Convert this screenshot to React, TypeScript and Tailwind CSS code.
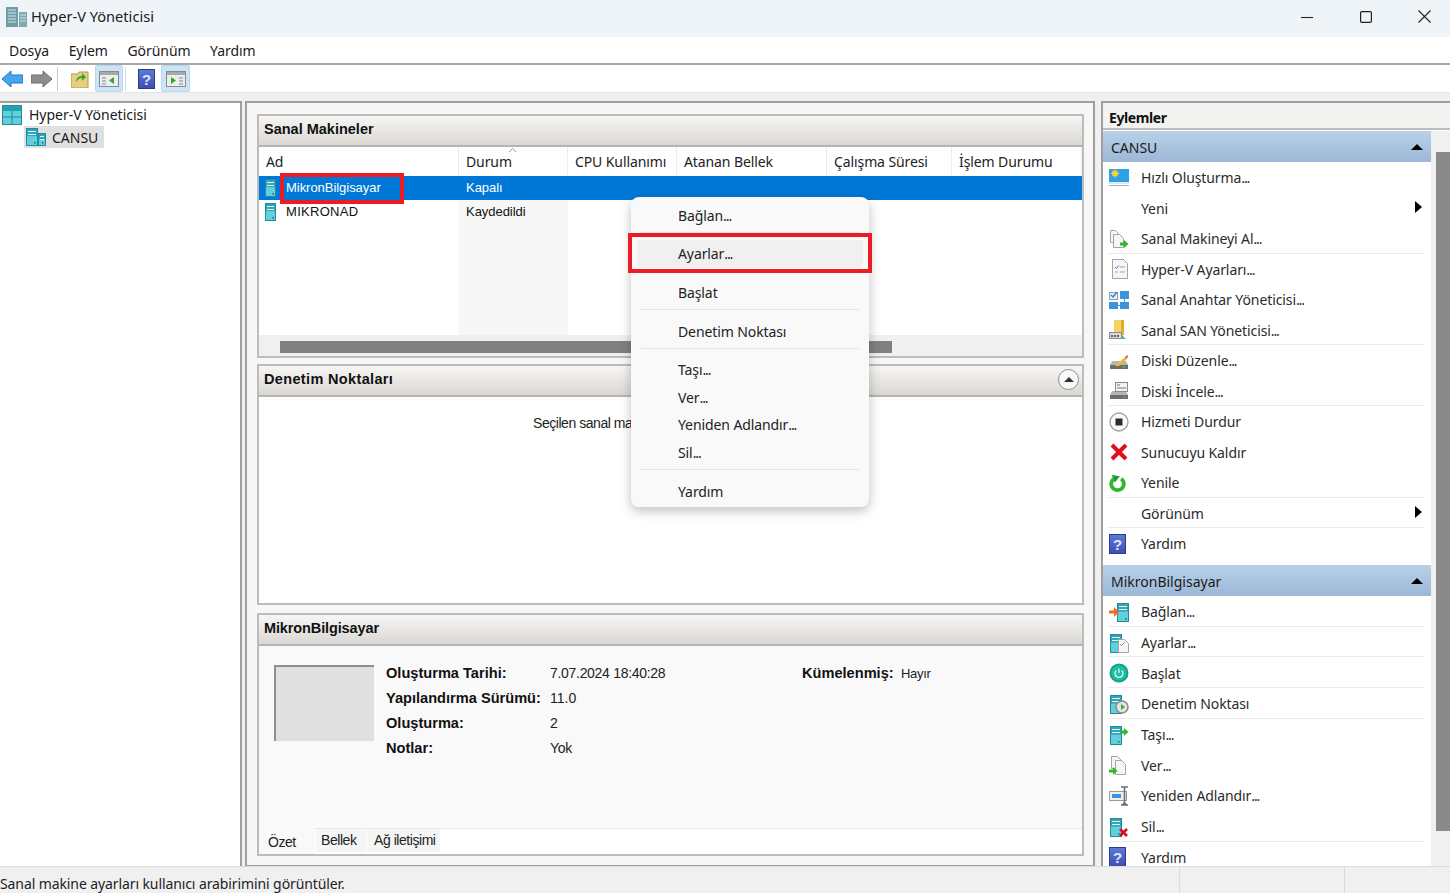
import type { ReactNode } from "react";

const ui = "font-['Noto_Sans','Open_Sans',sans-serif]";
const classic = "font-['Liberation_Sans',Arial,sans-serif]";

function Ico({ size = 20, children }: { size?: number; children: ReactNode }) {
  return (
    <svg width={size} height={size} viewBox="0 0 20 20" className="shrink-0">
      {children}
    </svg>
  );
}

// the dots in the original font sit much closer than Noto's
function Label({ text }: { text: string }) {
  if (!text.endsWith("...")) return <>{text}</>;
  return (
    <>
      {text.slice(0, -3)}
      <span className="tracking-[-1.1px]">...</span>
    </>
  );
}

// teal VM tower, reused by most of the action icons
const Tower = ({ x = 1, w = 11, y = 1, h = 18 }: { x?: number; w?: number; y?: number; h?: number }) => (
  <g>
    <rect x={x + 0.5} y={y + 0.5} width={w} height={h} fill="#5fd0dc" stroke="#1f8c9c" />
    <rect x={x + 1} y={y + 1} width={w - 1} height={h * 0.42} fill="#2fa5b5" />
    <path d={`M${x + 2} ${y + 3.5}h${w - 3}M${x + 2} ${y + 6.5}h${w - 3}`} stroke="#e8fbfd" />
    <rect x={x + w - 3} y={y + h - 3} width="1.5" height="1.5" fill="#15707d" />
  </g>
);

const GreenArrow = ({ x, y }: { x: number; y: number }) => (
  <path transform={`translate(${x} ${y})`} d="M0 2.5h4V0l4.5 4L4 8V5.5H0z" fill="#2dbb2d" />
);

const Doc = ({ x = 5, y = 1, w = 11, h = 16 }: { x?: number; y?: number; w?: number; h?: number }) => (
  <path
    d={`M${x + 0.5} ${y + 0.5}h${w - 4}l4 4v${h - 4}h-${w}z`}
    fill="#f6f6f6"
    stroke="#a5a5a5"
  />
);

const HelpIcon = ({ size = 20 }: { size?: number }) => (
  <svg width={size * 0.85} height={size} viewBox="0 0 17 20" className="shrink-0">
    <defs>
      <linearGradient id="helpFill" x1="0" y1="0" x2="0" y2="1">
        <stop offset="0" stopColor="#5d7bd8" />
        <stop offset="1" stopColor="#3d4fb0" />
      </linearGradient>
    </defs>
    <rect x="0.5" y="0.5" width="16" height="19" fill="url(#helpFill)" stroke="#2b3a8c" />
    <text x="8.5" y="15.5" textAnchor="middle" fontSize="15" fontWeight="700" fill="#e4e6fa" fontFamily="Liberation Sans">
      ?
    </text>
  </svg>
);

const Disk = () => (
  <g>
    <path d="M1 14l2-4h14l2 4v4H1z" fill="#b5b5b5" />
    <rect x="1" y="14" width="18" height="4" fill="#6d6d6d" />
    <rect x="14" y="15.5" width="2" height="1" fill="#59d659" />
  </g>
);

type Action = { label: string; icon?: ReactNode; sep?: boolean; arrow?: boolean };

const serverActions: Action[] = [
  {
    label: "Hızlı Oluşturma...",
    icon: (
      <Ico>
        <rect x="0" y="1" width="20" height="13" fill="#2f9fe6" />
        <circle cx="6" cy="5.5" r="3" fill="#ffcf33" />
        <path d="M6 1v9M1.5 5.5h9M3 2.5l6 6M9 2.5l-6 6" stroke="#ffcf33" strokeWidth="0.8" />
        <rect x="0" y="14" width="20" height="2" fill="#dfe8ee" />
        <rect x="0" y="17" width="20" height="1" fill="#9fb2bd" />
      </Ico>
    ),
  },
  { label: "Yeni", arrow: true },
  {
    label: "Sanal Makineyi Al...",
    sep: true,
    icon: (
      <Ico>
        <Doc x={1} y={1} w={9} h={12} />
        <Doc x={4} y={5} w={10} h={13} />
        <GreenArrow x={11} y={11} />
      </Ico>
    ),
  },
  {
    label: "Hyper-V Ayarları...",
    icon: (
      <Ico>
        <Doc x={3} y={0} w={15} h={19} />
        <path d="M6 8l1.5 1.5L10 6.5" stroke="#2a7fd6" fill="none" />
        <path d="M11 8h5M6 13h3M11 13h5" stroke="#a5a5a5" />
      </Ico>
    ),
  },
  {
    label: "Sanal Anahtar Yöneticisi...",
    icon: (
      <Ico>
        <rect x="0.5" y="2.5" width="8" height="7" fill="#e9eef3" stroke="#8aa0b5" />
        <path d="M2 5l2 2 4-5" stroke="#2a7fd6" strokeWidth="1.4" fill="none" />
        <rect x="11" y="1" width="9" height="8" fill="#3d93dc" />
        <rect x="0" y="12" width="9" height="7" fill="#3d93dc" />
        <rect x="11" y="12" width="9" height="7" fill="#3d93dc" />
        <path d="M9 15.5h2M15.5 9v3" stroke="#3d93dc" />
      </Ico>
    ),
  },
  {
    label: "Sanal SAN Yöneticisi...",
    sep: true,
    icon: (
      <Ico>
        <rect x="5" y="0" width="10" height="15" fill="#f5d561" />
        <rect x="12" y="0" width="3" height="15" fill="#d8ae33" />
        <rect x="0.5" y="12.5" width="12" height="6" fill="#d9d9d9" stroke="#8b8b8b" />
        <path d="M3 15v2M6 15v2M9 15v2" stroke="#333" strokeWidth="1.4" />
        <path d="M13 15l4 4h-4z" fill="#69b96b" />
      </Ico>
    ),
  },
  {
    label: "Diski Düzenle...",
    icon: (
      <Ico>
        <Disk />
        <path d="M6 15L16 6l2 2-8 7z" fill="#f2b632" />
        <path d="M16 6l2-2 1 1-1 3z" fill="#e0574f" />
      </Ico>
    ),
  },
  {
    label: "Diski İncele...",
    sep: true,
    icon: (
      <Ico>
        <Disk />
        <rect x="6.5" y="1.5" width="12" height="9" fill="#f3f3f3" stroke="#888" />
        <path d="M8 4h3M8 7h9" stroke="#777" />
      </Ico>
    ),
  },
  {
    label: "Hizmeti Durdur",
    icon: (
      <Ico>
        <circle cx="10" cy="10" r="9" fill="#fafafa" stroke="#a5a5a5" strokeWidth="1.4" />
        <rect x="6.5" y="6.5" width="7" height="7" fill="#2b2b2b" />
      </Ico>
    ),
  },
  {
    label: "Sunucuyu Kaldır",
    icon: (
      <Ico>
        <path d="M3 3l14 14M17 3L3 17" stroke="#e0101e" strokeWidth="4" />
      </Ico>
    ),
  },
  {
    label: "Yenile",
    sep: true,
    icon: (
      <Ico size={18}>
        <path d="M13.5 5.2a7 7 0 1 1-8.5 .3" fill="none" stroke="#2fb52f" strokeWidth="4.2" />
        <path d="M3 1l9 1.5-5.5 7z" fill="#1f9c2a" />
      </Ico>
    ),
  },
  { label: "Görünüm", arrow: true, sep: true },
  { label: "Yardım", icon: <HelpIcon /> },
];

const vmActions: Action[] = [
  {
    label: "Bağlan...",
    sep: true,
    icon: (
      <Ico>
        <Tower x={8} w={11} />
        <path d="M0 8.5h5V5l5 5-5 5v-3.5H0z" fill="#f26a21" />
      </Ico>
    ),
  },
  {
    label: "Ayarlar...",
    sep: true,
    icon: (
      <Ico>
        <Tower x={1} w={11} />
        <Doc x={9} y={6} w={10} h={13} />
        <path d="M11 11l1.5 1.5L16 9" stroke="#6b93b5" fill="none" />
      </Ico>
    ),
  },
  {
    label: "Başlat",
    sep: true,
    icon: (
      <Ico>
        <circle cx="10" cy="10" r="9.5" fill="#12a38a" />
        <circle cx="10" cy="10" r="7.5" fill="#25bda2" />
        <path d="M7.3 7.5a4 4 0 1 0 5.4 0M10 5.5v4.5" stroke="#dff" strokeWidth="1.2" fill="none" />
      </Ico>
    ),
  },
  {
    label: "Denetim Noktası",
    sep: true,
    icon: (
      <Ico>
        <Tower x={1} w={11} />
        <circle cx="13" cy="13" r="6" fill="#e3e3e3" stroke="#8a8a8a" strokeWidth="1.5" />
        <path d="M12 10l4 3-4 3z" fill="#3eaa3e" />
      </Ico>
    ),
  },
  {
    label: "Taşı...",
    icon: (
      <Ico>
        <Tower x={1} w={11} />
        <GreenArrow x={11} y={3} />
      </Ico>
    ),
  },
  {
    label: "Ver...",
    icon: (
      <Ico>
        <Doc x={2} y={1} w={10} h={12} />
        <Doc x={6} y={5} w={10} h={14} />
        <GreenArrow x={0} y={12} />
      </Ico>
    ),
  },
  {
    label: "Yeniden Adlandır...",
    icon: (
      <Ico>
        <rect x="0.5" y="5.5" width="17" height="9" fill="#efefef" stroke="#9a9a9a" />
        <rect x="3" y="8" width="9" height="4" fill="#3a96e0" />
        <path d="M12 1h7M15.5 1v17M12 19h7" stroke="#707070" strokeWidth="1.6" />
        <path d="M12 19l3.5-3 3.5 3z" fill="#707070" />
      </Ico>
    ),
  },
  {
    label: "Sil...",
    sep: true,
    icon: (
      <Ico>
        <Tower x={1} w={11} />
        <path d="M11 12l7 7M18 12l-7 7" stroke="#d3101c" strokeWidth="2.6" />
      </Ico>
    ),
  },
  { label: "Yardım", icon: <HelpIcon /> },
];

function ActionRow({ a, tall }: { a: Action; tall?: boolean }) {
  return (
    <div className={`${tall ? "h-[30.7px]" : "h-[30.5px]"} ml-[5px] w-[317px] flex items-center pt-[2px] border-b ${a.sep ? "border-[#ececec]" : "border-transparent"}`}>
      <div className="w-[33px] pl-px flex justify-start">{a.icon}</div>
      <span className="text-[14px] text-[#2b2b2b] tracking-[-0.1px] whitespace-nowrap">
        <Label text={a.label} />
      </span>
      {a.arrow && (
        <svg width="7" height="12" viewBox="0 0 7 12" className="ml-auto mr-[3px] mb-[3px]">
          <path d="M0 0l7 6-7 6z" fill="#000" />
        </svg>
      )}
    </div>
  );
}

function SectionHead({ title }: { title: string }) {
  return (
    <div className="h-[31px] pl-[8px] pr-[8px] pt-[2px] flex items-center justify-between bg-gradient-to-b from-[#b9d1e8] to-[#9cb8d6]">
      <span className="text-[14px] text-[#1a1a1a]">{title}</span>
      <svg width="12" height="6" viewBox="0 0 12 6" className="mb-[2px]">
        <path d="M0 6l6-6 6 6z" fill="#000" />
      </svg>
    </div>
  );
}

function PanelHead({ title, spacing = "", children }: { title: string; spacing?: string; children?: ReactNode }) {
  return (
    <div className="h-[31px] shrink-0 pl-[5px] pr-[3px] pb-[2px] flex items-center justify-between bg-gradient-to-b from-[#f7f6f4] to-[#dbd8d3] border-b-2 border-[#b4b4b4]">
      <span className={`${classic} text-[14.5px] font-bold text-[#111] ${spacing}`}>{title}</span>
      {children}
    </div>
  );
}

const columns = "grid grid-cols-[200px_109px_109px_150px_125px_1fr]";

const MenuSep = () => <div className="h-px mx-[10px] mt-[3px] mb-[7px] bg-[#e3e3e3]" />;

function MenuItem({ label, hover }: { label: string; hover?: boolean }) {
  return (
    <div className={`h-[27.6px] mx-[6px] pl-[41px] flex items-center text-[14px] text-[#222] rounded-[3px] tracking-[-0.1px] ${hover ? "bg-[#f0f0f0]" : ""}`}>
      <span>
        <Label text={label} />
      </span>
    </div>
  );
}

export default function App() {
  return (
    <div className={`${ui} relative w-[1450px] h-[893px] overflow-hidden bg-[#f0f0f0] flex flex-col`}>
      {/* Title bar */}
      <div className="h-[37px] shrink-0 bg-[#eff4f9] flex items-center pl-[6px] pb-[4px]">
        <svg width="21" height="20" viewBox="0 0 21 20" className="mr-[4px]">
          <rect x="0" y="0" width="12" height="20" fill="#6f9ca6" />
          <path d="M2 3h8M2 6h8M2 9h8M2 12h8M2 15h8" stroke="#d5e6ea" />
          <rect x="13" y="5" width="8" height="15" fill="#7fa9b2" />
          <path d="M14 8h6M14 11h6M14 14h6" stroke="#d5e6ea" />
        </svg>
        <span className="text-[14.6px] text-[#1a1a1a]">Hyper-V Yöneticisi</span>
        <div className="ml-auto -mr-[4px] flex items-center">
          <div className="w-[59px] flex justify-center">
            <svg width="12" height="12" viewBox="0 0 12 12"><path d="M0 6.5h12" stroke="#222" strokeWidth="1.1" /></svg>
          </div>
          <div className="w-[59px] flex justify-center">
            <svg width="12" height="12" viewBox="0 0 12 12"><rect x="0.6" y="0.6" width="10.8" height="10.8" rx="1.2" fill="none" stroke="#222" strokeWidth="1.2" /></svg>
          </div>
          <div className="w-[59px] flex justify-center">
            <svg width="13" height="13" viewBox="0 0 13 13"><path d="M0.5 0.5l12 12M12.5 0.5l-12 12" stroke="#222" strokeWidth="1.1" /></svg>
          </div>
        </div>
      </div>

      {/* Menu bar */}
      <div className="h-[28px] shrink-0 bg-white border-b-2 border-[#a9a9a9] flex items-center pl-[9px] gap-[19.5px] text-[14px] text-[#1a1a1a] tracking-[-0.05px]">
        <span>Dosya</span>
        <span>Eylem</span>
        <span>Görünüm</span>
        <span>Yardım</span>
      </div>

      {/* Toolbar */}
      <div className="h-[28px] shrink-0 bg-white border-b border-[#e6e6e6] flex items-center pl-[2px]">
        <svg width="21" height="18" viewBox="0 0 21 18">
          <path d="M0 9l9-8v4h12v8H9v4z" fill="#46a6ee" stroke="#1e78c8" />
        </svg>
        <svg width="21" height="18" viewBox="0 0 21 18" className="ml-[8px]">
          <path d="M21 9l-9-8v4H0v8h12v4z" fill="#8d8d8d" stroke="#6d6d6d" />
        </svg>
        <div className="w-px h-[24px] bg-[#c9c9c9] ml-[5px]" />
        <svg width="18" height="18" viewBox="0 0 18 18" className="ml-[13px]">
          <path d="M0 4h7l1-2h9v16H0z" fill="#e7cd7e" stroke="#b79a45" />
          <path d="M5 12c0-4 3-6 6-6V3l4 4-4 4V8c-2 0-4 1-6 4z" fill="#37a537" />
        </svg>
        <ToolBtn>
          <rect x="0.5" y="0.5" width="19" height="15" fill="#eee" stroke="#8a8a8a" />
          <rect x="1" y="1" width="18" height="3" fill="#a9a9a9" />
          <path d="M3 7h4M3 10h4M3 13h4" stroke="#6e88a8" />
          <path d="M15 6v7l-5-3.5z" fill="#2eaa2e" />
        </ToolBtn>
        <div className="w-px h-[24px] bg-[#dcdcdc] ml-[2px]" />
        <div className="ml-[12px]"><HelpIcon size={20} /></div>
        <ToolBtn className="ml-[6px] w-[29px]">
          <rect x="0.5" y="0.5" width="19" height="15" fill="#eee" stroke="#8a8a8a" />
          <rect x="1" y="1" width="18" height="3" fill="#a9a9a9" />
          <path d="M13 7h4M13 10h4M13 13h4" stroke="#6e88a8" />
          <path d="M5 6v7l5-3.5z" fill="#2eaa2e" />
        </ToolBtn>
      </div>

      {/* Main */}
      <div className="flex-1 min-h-0 flex pt-[8px]">
        {/* Tree */}
        <div className="w-[242px] shrink-0 bg-white border-t-2 border-r-2 border-[#9f9f9f] pt-[1px]">
          <div className="flex items-center h-[21px] pl-[2px]">
            <svg width="20" height="20" viewBox="0 0 20 20">
              <rect x="0.5" y="0.5" width="19" height="19" fill="#5fd0dc" stroke="#1f8c9c" />
              <rect x="1" y="1" width="18" height="5" fill="#25a0b0" />
              <path d="M10 6v13M1 12h18" stroke="#1f8c9c" />
            </svg>
            <span className="ml-[7px] text-[14px] text-[#1a1a1a]">Hyper-V Yöneticisi</span>
          </div>
          <div className="ml-[24px] mt-[1px] w-[80px] h-[22px] flex items-center bg-[#e0e0e0] pl-[2px]">
            <svg width="20" height="18" viewBox="0 0 20 18">
              <Tower x={0} w={11} y={0} h={17} />
              <Tower x={12} w={7} y={5} h={12} />
            </svg>
            <span className="ml-[6px] text-[14px] text-[#1a1a1a]">CANSU</span>
          </div>
        </div>

        {/* Center frame */}
        <div className="ml-[3px] w-[850px] shrink-0 bg-[#f7f7f7] border-t-2 border-x-2 border-b border-[#9f9f9f] pl-[10px] pr-[9px] pt-[11px] flex flex-col">
          {/* VM list */}
          <div className="h-[244px] shrink-0 border-2 border-[#bcbcbc] bg-white flex flex-col">
            <PanelHead title="Sanal Makineler" />
            <div className={`${columns} h-[29px] shrink-0 text-[14px] text-[#222] tracking-[-0.1px]`}>
              {["Ad", "Durum", "CPU Kullanımı", "Atanan Bellek", "Çalışma Süresi", "İşlem Durumu"].map((c) => (
                <div key={c} className="relative pl-[7px] flex items-center pb-[1px] border-r border-[#ececec] whitespace-nowrap">
                  {c}
                  {c === "Durum" && (
                    <svg width="7" height="4" viewBox="0 0 7 4" className="absolute left-[50px] top-[1px]">
                      <path d="M0 4l3.5-3.5L7 4" stroke="#9a9a9a" fill="none" />
                    </svg>
                  )}
                </div>
              ))}
            </div>
            <div className={`${classic} flex-1 min-h-0 flex flex-col text-[13px] tracking-[-0.04px]`}>
              <div className={`${columns} h-[24px] shrink-0 bg-[#0078d7] text-white items-center`}>
                <div className="flex items-center pl-[6px]">
                  <VmGlyph />
                  <span className="ml-[10px]">MikronBilgisayar</span>
                </div>
                <div className="pl-[7px]">Kapalı</div>
              </div>
              <div className={`${columns} h-[24px] shrink-0 text-[#111]`}>
                <div className="flex items-center pl-[6px]">
                  <VmGlyph />
                  <span className="ml-[10px] tracking-[0.3px]">MIKRONAD</span>
                </div>
                <div className="pl-[7px] flex items-center bg-[#f7f7f7]">Kaydedildi</div>
              </div>
              <div className={`${columns} flex-1`}>
                <div />
                <div className="bg-[#f7f7f7]" />
              </div>
            </div>
            <div className="h-[21px] shrink-0 bg-[#f0f0f0] pl-[21px] pt-[2px] flex items-center">
              <div className="w-[612px] h-[12px] bg-[#808080]" />
            </div>
          </div>

          {/* Checkpoints */}
          <div className="mt-[6px] h-[241px] shrink-0 border-2 border-[#bcbcbc] bg-white flex flex-col">
            <PanelHead title="Denetim Noktaları" spacing="tracking-[0.35px]">
              <div className="w-[21px] h-[21px] mb-[1px] rounded-full bg-[#f8f8f8] border border-[#8d8d8d] flex items-center justify-center">
                <svg width="10" height="5" viewBox="0 0 10 5">
                  <path d="M0 5l5-5 5 5z" fill="#333" />
                </svg>
              </div>
            </PanelHead>
            <div className={`${classic} pt-[16px] pl-[274px] text-[14px] text-[#222] tracking-[-0.45px]`}>
              Seçilen sanal ma
            </div>
          </div>

          {/* Details */}
          <div className="mt-[8px] h-[243px] shrink-0 border-2 border-[#bcbcbc] bg-[#f9f9f9] flex flex-col">
            <PanelHead title="MikronBilgisayar" spacing="tracking-[-0.12px]" />
            <div className={`${classic} flex-1 min-h-0 flex pt-[19px] pl-[15px] text-[14px] text-[#222]`}>
              <div className="w-[100px] h-[76px] shrink-0 bg-[#e0e0e0] border-t-2 border-l-2 border-[#8e8e8e]" />
              <div className="ml-[12px] mt-[-4px] grid grid-cols-[164px_252px_99px_auto] auto-rows-[25px] items-center h-fit">
                <b className="text-[14.6px] text-[#111]">Oluşturma Tarihi:</b>
                <span className="tracking-[-0.3px]">7.07.2024 18:40:28</span>
                <b className="text-[14.6px] text-[#111]">Kümelenmiş:</b>
                <span className="tracking-[-0.3px] text-[13px]">Hayır</span>
                <b className="text-[14.6px] text-[#111] whitespace-nowrap">Yapılandırma Sürümü:</b>
                <span className="col-span-3">11.0</span>
                <b className="text-[14.6px] text-[#111]">Oluşturma:</b>
                <span className="col-span-3">2</span>
                <b className="text-[14.6px] text-[#111]">Notlar:</b>
                <span className="col-span-3 tracking-[-0.3px]">Yok</span>
              </div>
            </div>
            <div className={`${classic} h-[26px] shrink-0 bg-white border-t border-[#e8e8e8] flex text-[14px] text-[#222] tracking-[-0.45px]`}>
              <div className="w-[56px] -mt-px bg-[#f9f9f9] pl-[9px] pt-[4px]">Özet</div>
              <div className="w-[50px] ml-px mb-[2px] bg-[#f5f5f5] pl-[5px] pt-px">Bellek</div>
              <div className="w-[73px] ml-px mb-[2px] bg-[#f5f5f5] pl-[7px] pt-px">Ağ iletişimi</div>
            </div>
          </div>
        </div>

        {/* Actions */}
        <div className="ml-[6px] flex-1 min-w-0 bg-white border-t-2 border-l-2 border-[#9f9f9f] flex flex-col">
          <div className="h-[27px] shrink-0 pl-[6px] pt-[4px] flex items-center bg-[#f3f3f2] border-b-2 border-[#bdbdbd]">
            <span className="text-[14px] font-bold text-[#111] tracking-[-0.4px]">Eylemler</span>
          </div>
          <div className="flex-1 min-h-0 flex mt-[1px]">
            <div className="w-[328px] shrink-0 overflow-hidden">
              <SectionHead title="CANSU" />
              <div>
                {serverActions.map((a) => <ActionRow key={a.label} a={a} />)}
              </div>
              <div className="mt-[6.5px]">
                <SectionHead title="MikronBilgisayar" />
                {vmActions.map((a) => <ActionRow key={a.label} a={a} tall />)}
              </div>
            </div>
            <div className="flex-1 bg-[#f0f0f0] pt-[21px] pl-[5px]">
              <div className="w-[14px] h-[679px] bg-[#8a8a8a]" />
            </div>
          </div>
        </div>
      </div>

      {/* Status bar */}
      <div className="h-[27px] shrink-0 bg-[#f0f0f0] border-t border-[#dcdcdc] flex text-[14px] text-[#222] tracking-[-0.1px]">
        <span className="pt-[6px] w-[1179px]">Sanal makine ayarları kullanıcı arabirimini görüntüler.</span>
        <div className="w-[166px] h-full border-x border-[#dcdcdc]" />
      </div>

      {/* Context menu */}
      <div className="absolute left-[631px] top-[197px] w-[238px] rounded-[8px] bg-[#f9f9f9] pt-[4.5px] pb-[2.5px] shadow-[0_4px_12px_rgba(0,0,0,0.25)]">
        <MenuItem label="Bağlan..." />
        <MenuSep />
        <MenuItem label="Ayarlar..." hover />
        <MenuSep />
        <MenuItem label="Başlat" />
        <MenuSep />
        <MenuItem label="Denetim Noktası" />
        <MenuSep />
        <MenuItem label="Taşı..." />
        <MenuItem label="Ver..." />
        <MenuItem label="Yeniden Adlandır..." />
        <MenuItem label="Sil..." />
        <MenuSep />
        <MenuItem label="Yardım" />
      </div>

      {/* Red annotation boxes */}
      <div className="absolute left-[280px] top-[173px] w-[124px] h-[31px] border-[4px] border-[#ed1c24]" />
      <div className="absolute left-[628px] top-[233px] w-[244px] h-[40px] border-[4px] border-[#ed1c24]" />
    </div>
  );
}

function ToolBtn({ children, className = "ml-[6px] w-[28px]" }: { children: ReactNode; className?: string }) {
  return (
    <div className={`${className} h-[27px] bg-[#cce4f7] border border-[#b8d8f2] rounded-[2px] flex items-center justify-center`}>
      <svg width="20" height="16" viewBox="0 0 20 16">{children}</svg>
    </div>
  );
}

function VmGlyph() {
  return (
    <svg width="11" height="18" viewBox="0 0 11 18" className="shrink-0">
      <rect x="0.5" y="0.5" width="10" height="17" fill="#5fd0dc" stroke="#1f8c9c" />
      <rect x="1" y="1" width="9" height="7" fill="#2fa5b5" />
      <path d="M2 3.5h7M2 6.5h7" stroke="#e8fbfd" />
      <rect x="7.5" y="14" width="1.5" height="1.5" fill="#15707d" />
    </svg>
  );
}
